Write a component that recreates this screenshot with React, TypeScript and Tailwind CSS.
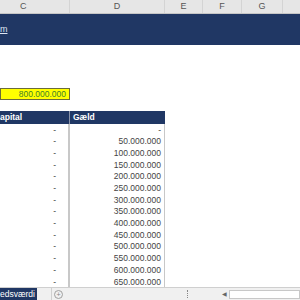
const cols = [
  { label: "C", w: 70 },
  { label: "D", w: 95 },
  { label: "E", w: 38 },
  { label: "F", w: 39 },
  { label: "G", w: 41 },
  { label: "", w: 20 },
]

const rows = [
  "-",
  "50.000.000",
  "100.000.000",
  "150.000.000",
  "200.000.000",
  "250.000.000",
  "300.000.000",
  "350.000.000",
  "400.000.000",
  "450.000.000",
  "500.000.000",
  "550.000.000",
  "600.000.000",
  "650.000.000",
]

const App = () => {
  return (
    <div
      className="w-[300px] h-[300px] overflow-hidden flex flex-col bg-white text-[8.5px] leading-none text-[#333]"
      style={{ fontFamily: '"Liberation Sans", Arial, sans-serif' }}
    >
      {/* column letters */}
      <div className="flex h-[14px] shrink-0 bg-[#e6e6e6] border-b border-[#c6c6c6]">
        {cols.map((c, i) => (
          <div
            key={i}
            style={{ width: c.w }}
            className={
              i === 0
                ? "shrink-0 flex items-center justify-start pl-[20px] border-r border-[#d4d4d4] text-[9px] text-[#555]"
                : "shrink-0 flex items-center justify-center border-r border-[#d4d4d4] text-[9px] text-[#555]"
            }
          >
            {c.label}
          </div>
        ))}
      </div>

      <div className="flex-1 overflow-hidden flex flex-col">
        {/* banner */}
        <div className="h-[31px] shrink-0 bg-[#203764] flex items-center">
          <span className="text-[#dfe6f2] text-[9px] underline">m</span>
        </div>

        <div className="h-[43px] shrink-0" />

        {/* yellow input */}
        <div className="flex h-[12px] shrink-0">
          <div className="w-[70px] bg-[#ffff00] border border-[#6b6b3a] flex items-center justify-end pr-[3px] text-[#3f7f2a]">
            800.000.000
          </div>
        </div>

        <div className="h-[11px] shrink-0" />

        {/* table header */}
        <div className="flex h-[13px] shrink-0">
          <div className="w-[165px] bg-[#203764] flex items-center font-bold text-white text-[8.5px]">
            <div className="w-[70px] border-r border-[#8a94aa] h-full flex items-center">apital</div>
            <div className="pl-[3px]">Gæld</div>
          </div>
        </div>

        {/* data rows */}
        <div className="flex flex-col">
          {rows.map((v, i) => (
            <div key={i} className="flex h-[11.7px] shrink-0">
              <div className="w-[70px] border-r-2 border-[#c8c8c8] flex items-center justify-end pr-[12px] text-[#444]">
                -
              </div>
              <div className="w-[95px] border-r border-[#c8c8c8] flex items-center justify-end pr-[3px] text-[#444]">
                {v}
              </div>
            </div>
          ))}
        </div>
      </div>

      {/* sheet tabs */}
      <div className="h-[13px] shrink-0 flex items-stretch bg-[#f0f0f0] border-t border-[#cfcfcf]">
        <div className="w-[37px] bg-[#203764] text-white text-[8.5px] flex items-center">edsværdi</div>
        <div className="w-[15px] border-r border-[#d0d0d0]" />
        <div className="ml-[2px] flex items-center">
          <div className="w-[9px] h-[9px] rounded-full border border-[#a0a0a0] flex items-center justify-center text-[7px] leading-[7px] text-[#888]">
            +
          </div>
        </div>
        <div className="w-[121px]" />
        <div className="w-[6px] flex items-center justify-center">
          <div className="w-[1px] h-[8px] border-l border-dotted border-[#888]" />
        </div>
        <div className="w-[29px]" />
        <div className="w-[10px] flex items-center justify-center text-[6px] text-[#666]">◀</div>
        <div className="flex-1 flex items-center">
          <div className="w-full h-[9px] bg-white border border-[#c8c8c8]" />
        </div>
      </div>
    </div>
  )
}

export default App
